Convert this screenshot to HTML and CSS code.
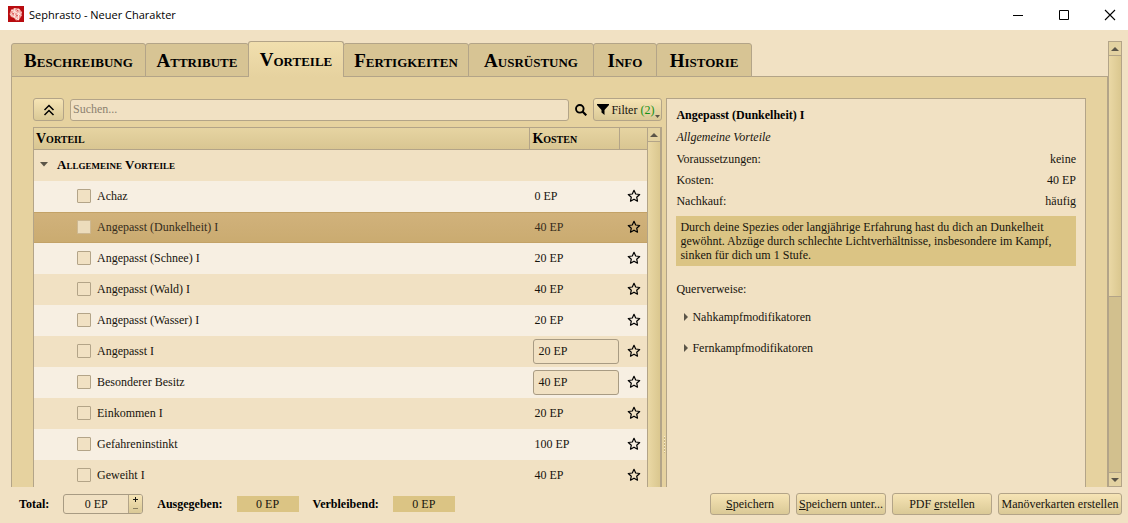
FILE: index.html
```html
<!DOCTYPE html>
<html lang="de">
<head>
<meta charset="utf-8">
<title>Sephrasto - Neuer Charakter</title>
<link rel="stylesheet" href="styles.css">
</head>
<body>
<svg class="sprite" aria-hidden="true">
  <symbol id="star" viewBox="0 0 14 14"><path d="M7 1.300l1.700 3.700 4 .5-3 2.700.8 4L7 10.200l-3.500 2 .8-4-3-2.700 4-.5z" fill="none" stroke="#000" stroke-width="1.200" stroke-linejoin="round"/></symbol>
</svg>
<header class="titlebar">
  <svg class="app-icon" viewBox="0 0 16 16"><rect width="16" height="16" fill="#b80c10"/><path d="M1.500 8L3 4l3.500-2L11 2.500 14 6l-.5 4-2.500 4-3 .5L6 12l-3-1z" fill="#ee9a94"/><path d="M3 4l4 1.500L11 3M7 2L6 6 2.500 8.500 6 11l1-5 4.500 2 2 2M11 3v4l-5 4 4.500 3V9l3-3M8 13l3.500-5" fill="none" stroke="#fff2ed" stroke-width=".8"/><path d="M4 7l2 1M8.500 4l2 1M8 9l2 1" stroke="#d0353a" stroke-width=".8"/></svg>
  <h1 class="window-title">Sephrasto - Neuer Charakter</h1>
  <div class="window-controls">
    <button aria-label="Minimieren"><svg viewBox="0 0 12 12"><path d="M1 6.500h10" stroke="#000"/></svg></button>
    <button aria-label="Maximieren"><svg viewBox="0 0 12 12"><path d="M1.500 1.500h9v9h-9z" fill="none" stroke="#000"/></svg></button>
    <button aria-label="Schließen"><svg viewBox="0 0 12 12"><path d="M1 1l10 10M11 1L1 11" stroke="#000" stroke-width="1.100"/></svg></button>
  </div>
</header>
<main class="workspace">
  <div class="content">
    <nav class="tabs" role="tablist">
      <button class="tab wide" role="tab">Beschreibung</button>
      <button class="tab small" role="tab">Attribute</button>
      <button class="tab small selected" role="tab" aria-selected="true">Vorteile</button>
      <button class="tab medium" role="tab">Fertigkeiten</button>
      <button class="tab medium" role="tab">Ausrüstung</button>
      <button class="tab tiny" role="tab">Info</button>
      <button class="tab small" role="tab">Historie</button>
    </nav>
    <div class="pane" role="tabpanel">
      <section class="browser">
        <div class="toolbar">
          <button class="btn collapse" aria-label="Alle einklappen"><svg viewBox="0 0 12 12"><path d="M1.500 6L6 1.500 10.500 6M1.500 11L6 6.500l4.500 4.500" fill="none" stroke="#000" stroke-width="1.500"/></svg></button>
          <input class="search" type="text" placeholder="Suchen..." aria-label="Suchen">
          <svg class="lens" viewBox="0 0 12 12"><circle cx="4.800" cy="4.800" r="3.800" fill="none" stroke="#000" stroke-width="1.900"/><path d="M7.500 7.500l3.800 3.800" stroke="#000" stroke-width="2.200"/></svg>
          <button class="btn filter"><svg class="funnel" viewBox="0 0 12 11"><path d="M0 0h12v1L7.500 6v5L4.500 8.500V6L0 1z"/></svg><span>Filter <span class="count">(2)</span></span><svg class="drop" viewBox="0 0 5 3"><path d="M0 0h5L2.500 3z" fill="#5b5548"/></svg></button>
        </div>
        <div class="list">
          <table class="advantages">
            <thead><tr><th>Vorteil</th><th class="col-cost">Kosten</th><th class="col-star"></th></tr></thead>
            <tbody>
              <tr class="group"><td colspan="3"><svg class="arrow" viewBox="0 0 8 5"><path d="M0 0h8L4 4.500z" fill="#5b5548"/></svg><span>Allgemeine Vorteile</span></td></tr>
              <tr><td><label><input type="checkbox">Achaz</label></td><td>0 EP</td><td><svg class="star"><use href="#star"/></svg></td></tr>
              <tr class="current"><td><label><input type="checkbox">Angepasst (Dunkelheit) I</label></td><td>40 EP</td><td><svg class="star"><use href="#star"/></svg></td></tr>
              <tr><td><label><input type="checkbox">Angepasst (Schnee) I</label></td><td>20 EP</td><td><svg class="star"><use href="#star"/></svg></td></tr>
              <tr><td><label><input type="checkbox">Angepasst (Wald) I</label></td><td>40 EP</td><td><svg class="star"><use href="#star"/></svg></td></tr>
              <tr><td><label><input type="checkbox">Angepasst (Wasser) I</label></td><td>20 EP</td><td><svg class="star"><use href="#star"/></svg></td></tr>
              <tr><td><label><input type="checkbox">Angepasst I</label></td><td class="edit"><input class="cost" type="text" value="20 EP" aria-label="Kosten Angepasst I"></td><td><svg class="star"><use href="#star"/></svg></td></tr>
              <tr><td><label><input type="checkbox">Besonderer Besitz</label></td><td class="edit"><input class="cost" type="text" value="40 EP" aria-label="Kosten Besonderer Besitz"></td><td><svg class="star"><use href="#star"/></svg></td></tr>
              <tr><td><label><input type="checkbox">Einkommen I</label></td><td>20 EP</td><td><svg class="star"><use href="#star"/></svg></td></tr>
              <tr><td><label><input type="checkbox">Gefahreninstinkt</label></td><td>100 EP</td><td><svg class="star"><use href="#star"/></svg></td></tr>
              <tr><td><label><input type="checkbox">Geweiht I</label></td><td>40 EP</td><td><svg class="star"><use href="#star"/></svg></td></tr>
            </tbody>
          </table>
          <div class="scrollbar list-scroll">
            <span class="step"><svg viewBox="0 0 8 4"><path d="M0 4h8L4 0z" fill="#5b5548"/></svg></span>
            <span class="thumb"></span>
          </div>
        </div>
      </section>
      <div class="splitter"><span class="grip"></span></div>
      <section class="details">
        <h2>Angepasst (Dunkelheit) I</h2>
        <p class="category">Allgemeine Vorteile</p>
        <dl>
          <div><dt>Voraussetzungen:</dt><dd>keine</dd></div>
          <div><dt>Kosten:</dt><dd>40 EP</dd></div>
          <div><dt>Nachkauf:</dt><dd>häufig</dd></div>
        </dl>
        <p class="description">Durch deine Spezies oder langjährige Erfahrung hast du dich an Dunkelheit gewöhnt. Abzüge durch schlechte Lichtverhältnisse, insbesondere im Kampf, sinken für dich um 1 Stufe.</p>
        <p class="refs-title">Querverweise:</p>
        <ul class="refs">
          <li><svg viewBox="0 0 4 8"><path d="M0 0l4 4-4 4z" fill="#5b5548"/></svg>Nahkampfmodifikatoren</li>
          <li><svg viewBox="0 0 4 8"><path d="M0 0l4 4-4 4z" fill="#5b5548"/></svg>Fernkampfmodifikatoren</li>
        </ul>
      </section>
    </div>
  </div>
  <div class="scrollbar page-scroll">
    <span class="step"><svg viewBox="0 0 8 4"><path d="M0 4h8L4 0z" fill="#5b5548"/></svg></span>
    <span class="thumb"></span>
    <span class="track"></span>
    <span class="step"><svg viewBox="0 0 8 4"><path d="M0 0h8L4 4z" fill="#5b5548"/></svg></span>
  </div>
</main>
<footer class="statusbar">
  <label class="caption" for="total">Total:</label>
  <div class="spin">
    <input id="total" type="text" value="0 EP">
    <div class="spin-buttons">
      <button aria-label="Erhöhen"><svg viewBox="0 0 5 5"><path d="M0 2.500h5M2.500 0v5" stroke="#1c1a14"/></svg></button>
      <button aria-label="Verringern"><svg viewBox="0 0 5 5"><path d="M0 2.500h5" stroke="#8c8061"/></svg></button>
    </div>
  </div>
  <span class="caption">Ausgegeben:</span><output>0 EP</output>
  <span class="caption">Verbleibend:</span><output>0 EP</output>
  <div class="actions">
    <button class="btn save"><u>S</u>peichern</button>
    <button class="btn save-as"><u>S</u>peichern unter...</button>
    <button class="btn pdf">PDF <u>e</u>rstellen</button>
    <button class="btn cards">Manöverkarten erstellen</button>
  </div>
</footer>
</body>
</html>
```
FILE: styles.css
```css
:root {
  --paper: #f1e1c3;
  --pane: #e6d29f;
  --line: #b3a488;
  --field: #dbc484;
  --button: linear-gradient(#f6e4b5, #dac996);
}
* { box-sizing: border-box; }
body {
  margin: 0;
  height: 100vh;
  display: flex;
  flex-direction: column;
  overflow: hidden;
  background: var(--paper);
  color: #17140d;
  font: 12px/14px "Liberation Serif", serif;
}
button, input { font: inherit; color: inherit; }
svg { display: block; }
.sprite { display: none; }

.titlebar {
  flex: none;
  height: 30px;
  display: flex;
  align-items: center;
  padding-left: 8px;
  background: #fff;
  color: #000;
}
.app-icon { width: 16px; height: 16px; margin-top: -2px; }
.window-title { margin: 0 0 0 5px; font: 11px/16px "Open Sans", sans-serif; }
.window-controls { display: flex; margin: 0 -5px 0 auto; }
.window-controls button {
  width: 46px;
  height: 28px;
  display: grid;
  place-items: center;
  padding: 0;
  border: 0;
  background: none;
}
.window-controls svg { width: 12px; height: 12px; }

.workspace {
  flex: 1;
  min-height: 0;
  display: flex;
  padding: 11px 6px 0 11px;
}
.content { flex: 1; min-width: 0; display: flex; flex-direction: column; }
.tabs { flex: none; display: flex; align-items: flex-end; height: 36px; z-index: 1; }
.tab {
  height: 34px;
  padding: 2px 0 0;
  margin-left: -1px;
  border: 1px solid var(--line);
  border-radius: 3px 3px 0 0;
  background: #d7c494;
  color: #000;
  font: bold 19px/24px "Liberation Serif", serif;
  font-variant-caps: small-caps;
  white-space: nowrap;
}
.tab:first-child { margin-left: 0; }
.tab.wide { width: 135px; }
.tab.medium { width: 126px; }
.tab.small { width: 104px; }
.tab.tiny { width: 64px; }
.tab.small.selected, .tab.small:last-child { width: 96px; }
.tab.selected {
  height: 36px;
  padding: 0;
  border-bottom: 0;
  background: linear-gradient(#f1dfae, var(--pane));
}
.pane {
  flex: 1;
  min-height: 0;
  display: grid;
  grid-template-columns: 3fr 4px 2fr;
  grid-template-rows: minmax(0, 1fr);
  margin-top: -1px;
  padding: 21px 21px 0;
  border: 1px solid var(--line);
  border-bottom: 0;
  background: var(--pane);
}
.browser { min-width: 0; display: flex; flex-direction: column; }
.toolbar { flex: none; display: flex; align-items: center; margin-bottom: 6px; }
.btn {
  height: 23px;
  padding: 0;
  border: 1px solid var(--line);
  border-radius: 3px;
  background: var(--button);
  white-space: nowrap;
}
.collapse { width: 31px; display: grid; place-items: center; }
.collapse svg { width: 12px; height: 12px; }
.search {
  flex: 1;
  min-width: 0;
  height: 22px;
  margin-left: 6px;
  padding: 0 2px;
  border: 1px solid var(--line);
  border-radius: 3px;
  background: var(--paper);
}
.search::placeholder { color: #8d8270; opacity: 1; }
.lens { width: 12px; height: 12px; margin: 0 6px; }
.filter {
  position: relative;
  width: 69px;
  display: flex;
  align-items: center;
  gap: 2px;
  padding-left: 3px;
}
.funnel { width: 12px; height: 11px; }
.count { color: #159015; }
.drop { position: absolute; right: 1px; bottom: 2px; width: 5px; height: 3px; }

.list {
  flex: 1;
  min-height: 0;
  display: flex;
  align-items: flex-start;
  overflow: hidden;
  border: 1px solid var(--line);
  border-bottom: 0;
}
.advantages { flex: 1; border-collapse: separate; border-spacing: 0; table-layout: fixed; background: var(--paper); }
.advantages th {
  height: 22px;
  padding: 0 2px;
  border-bottom: 1px solid var(--line);
  background: linear-gradient(#e6d4a2, #d9c692);
  color: #000;
  font: bold 14px/16px "Liberation Serif", serif;
  font-variant-caps: small-caps;
  text-align: left;
}
.advantages th + th { border-left: 1px solid var(--line); }
.col-cost { width: 90px; }
.col-star { width: 28px; }
.advantages td { height: 31px; padding: 0 0 1px 5px; }
.advantages tbody tr:nth-child(even) { background: #f7efe2; }
.advantages td:first-child { padding-left: 43px; }
.advantages label { display: flex; align-items: center; }
.advantages [type="checkbox"] {
  appearance: none;
  width: 14px;
  height: 14px;
  margin: 0 6px 0 0;
  border: 1px solid var(--line);
  border-radius: 1px;
  background: var(--paper);
}
.advantages td:last-child { padding-left: 8px; }
.advantages .edit { padding: 0 0 0 4px; }
.cost {
  display: block;
  width: 86px;
  height: 25px;
  padding: 0 4px;
  border: 1px solid #a89b83;
  border-radius: 3px;
  background: var(--paper);
}
.star { width: 14px; height: 14px; }
.advantages .group td { padding-left: 6px; }
.group td { color: #000; font: bold 13px/16px "Liberation Serif", serif; font-variant-caps: small-caps; }
.arrow { display: inline-block; width: 8px; height: 5px; margin-right: 9px; vertical-align: 2px; }
.advantages tbody .current { background: linear-gradient(#d1b27c, #caab70); color: #352c1b; }
.current td { border: solid #c3a267; border-width: 1px 0; }
.current [type="checkbox"] { border-color: #cdb892; background: #ecdcbc; }

.scrollbar { flex: none; width: 14px; align-self: stretch; display: flex; flex-direction: column; border: 1px solid var(--line); border-bottom: 0; }
.list-scroll { border-width: 0 1px; }
.step { flex: none; height: 14px; display: grid; place-items: center; border-bottom: 1px solid var(--line); background: #e3d2a1; }
.step svg { width: 8px; height: 4px; }
.thumb { flex: 1; background: linear-gradient(90deg, #ead8a5, #dac78f); }
.page-scroll .thumb { flex: 241; border-bottom: 1px solid var(--line); }
.page-scroll .track { flex: 175; border-bottom: 1px solid var(--line); background: #d2c08e; }

.splitter { display: flex; align-items: flex-end; justify-content: center; padding-bottom: 34px; }
.grip { width: 1px; height: 17px; background: repeating-linear-gradient(#f8ecd0 0 1px, #c8b486 1px 3px); }

.details { min-width: 0; padding: 8px 9px; border: 1px solid var(--line); border-bottom: 0; background: var(--paper); }
.details h2 { margin: 0 0 7px; color: #000; font: bold 12px/16px "Liberation Serif", serif; }
.category { margin: 0 0 8px; font-style: italic; }
.details dl { display: grid; gap: 7px; margin: 0 0 8px; }
.details dl div { display: flex; justify-content: space-between; }
.details dd { margin: 0; }
.description { margin: 0; padding: 4px 16px 4px 4px; background: var(--field); }
.refs-title { margin: 16px 0 14px; }
.refs { display: grid; gap: 17px; margin: 0; padding: 0 0 0 8px; list-style: none; }
.refs li { display: flex; align-items: center; gap: 4px; }
.refs svg { width: 4px; height: 8px; }

.statusbar { flex: none; height: 36px; display: flex; align-items: center; padding: 0 6px 2px 19px; }
.caption { margin-right: 14px; color: #000; font-weight: bold; }
.spin {
  width: 80px;
  height: 20px;
  display: flex;
  margin-right: 14px;
  border: 1px solid #a89b83;
  border-radius: 3px;
  overflow: hidden;
}
.spin input { flex: 1; min-width: 0; padding: 0; border: 0; background: none; text-align: center; }
.spin-buttons { width: 14px; display: flex; flex-direction: column; border-left: 1px solid var(--line); background: var(--button); }
.spin-buttons button { flex: 1; min-height: 0; display: grid; place-items: center; padding: 0; border: 0; background: none; }
.spin-buttons svg { width: 5px; height: 5px; }
output { width: 62px; margin-right: 14px; padding: 1px 0; background: var(--field); text-align: center; }
.actions { display: flex; gap: 6px; margin-left: auto; }
.actions .btn { height: 22px; }
.save { width: 80px; }
.save-as { width: 90px; }
.pdf { width: 100px; }
.cards { width: 124px; }
```
